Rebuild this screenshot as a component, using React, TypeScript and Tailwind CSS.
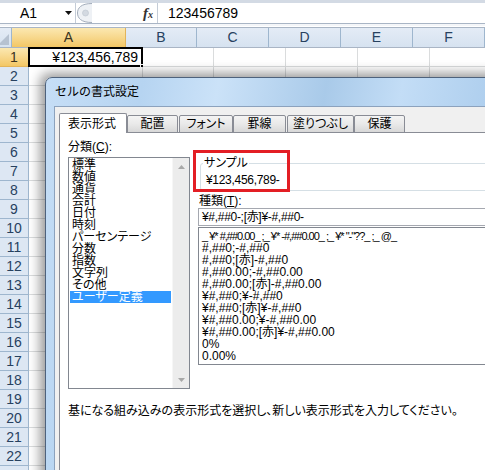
import React from "react";

const cols = [
  { label: "A", w: "w-[114px]" },
  { label: "B", w: "w-[71px]" },
  { label: "C", w: "w-[72px]" },
  { label: "D", w: "w-[72px]" },
  { label: "E", w: "w-[72px]" },
  { label: "F", w: "w-[72px]" },
];

const categories = [
  "標準",
  "数値",
  "通貨",
  "会計",
  "日付",
  "時刻",
  "パーセンテージ",
  "分数",
  "指数",
  "文字列",
  "その他",
  "ユーザー定義",
];

const formats = [
  '_ ¥* #,##0.00_ ;_ ¥* -#,##0.00_ ;_ ¥* "-"??_ ;_ @_',
  "#,##0;-#,##0",
  "#,##0;[赤]-#,##0",
  "#,##0.00;-#,##0.00",
  "#,##0.00;[赤]-#,##0.00",
  "¥#,##0;¥-#,##0",
  "¥#,##0;[赤]¥-#,##0",
  "¥#,##0.00;¥-#,##0.00",
  "¥#,##0.00;[赤]¥-#,##0.00",
  "0%",
  "0.00%",
];

const tabs = [
  { label: "表示形式", cls: "w-[68px]", active: true },
  { label: "配置", cls: "w-[51px]" },
  { label: "フォント", cls: "ml-[1px] w-[54px]" },
  { label: "罫線", cls: "w-[53px]" },
  { label: "塗りつぶし", cls: "ml-[1px] w-[67px]" },
  { label: "保護", cls: "w-[51px]" },
];

function FormulaBar() {
  return (
    <div className="h-[27px] flex flex-col">
      <div className="h-[3px] bg-[#d3dae4]" />
      <div className="h-[21px] flex bg-white border-b border-[#a9b5c5]">
        <div className="w-[76px] relative flex items-center pl-[20px] text-[14px] text-black border-r border-[#c4ccd7]">
          A1
          <svg className="absolute left-[65px] top-[8px]" width="7" height="4" viewBox="0 0 7 4">
            <path d="M0 0 L7 0 L3.5 4 Z" fill="#111" />
          </svg>
        </div>
        <div className="w-[17px] flex items-center">
          <svg width="17" height="20" viewBox="0 0 17 20">
            <path d="M16 0.5 C5 0.5 1.5 5 1.5 10 C1.5 15 5 19.5 16 19.5" fill="#eef1f5" stroke="#a3adbb" />
            <circle cx="9.5" cy="10" r="3" fill="#d3d9e1" stroke="#bcc4cf" strokeWidth="0.6" />
          </svg>
        </div>
        <div className="w-[50px]" />
        <div className="w-[14px] flex items-center font-['Liberation_Serif',serif] italic font-bold text-[15px] text-[#333] leading-none">
          f<span className="text-[10px] mt-[3px]">x</span>
        </div>
        <div className="flex-1 flex items-center pl-[10px] border-l border-[#c4ccd7] text-[14px] text-black">
          123456789
        </div>
      </div>
      <div className="h-[2px] bg-[#f4f6f9]" />
    </div>
  );
}

function Sheet() {
  const rows = Array.from({ length: 23 }, (_, i) => i + 1);
  return (
    <div className="flex flex-col">
      <div className="h-[21px] flex border-t border-b border-[#a9b5c5] bg-linear-to-b from-[#e4ecf6] to-[#d6e2f0]">
        <div className="w-[29px] h-full border-r border-[#9eb6ce] relative">
          <svg className="absolute right-[2px] bottom-[2px]" width="11" height="11" viewBox="0 0 11 11">
            <path d="M11 0 L11 11 L0 11 Z" fill="#b6c2d1" />
          </svg>
        </div>
        {cols.map((c, i) => (
          <div
            key={c.label}
            className={`${c.w} shrink-0 h-full flex items-center justify-center text-[14px] border-r ${
              i === 0
                ? "bg-linear-to-b from-[#fbe8b1] to-[#f3c764] border-[#e2b45a] text-[#3a3320]"
                : "border-[#9eb6ce] text-[#27415f]"
            }`}
          >
            {c.label}
          </div>
        ))}
      </div>
      {rows.map((r) => (
        <div key={r} className="h-[19px] flex">
          <div
            className={`w-[29px] shrink-0 h-full flex items-center justify-center text-[14px] border-r border-b ${
              r === 1
                ? "bg-linear-to-b from-[#fbe8b1] to-[#f3c764] border-[#e2b45a] text-[#3a3320]"
                : "bg-[#dde7f3] border-[#9eb6ce] text-[#27415f]"
            }`}
          >
            {r < 23 ? r : ""}
          </div>
          {cols.map((c, i) => (
            <div
              key={c.label}
              className={`${c.w} shrink-0 h-full border-r border-b border-[#dadcdd] bg-white relative`}
            >
              {r === 1 && i === 0 && (
                <>
                  <div className="h-full flex items-center justify-end pr-[4px] text-[14px] text-black">¥123,456,789</div>
                  <div className="absolute -left-px -top-px -right-px -bottom-px border-2 border-black" />
                  <div className="absolute -right-[4px] -bottom-[4px] w-[6px] h-[6px] bg-black border border-white" />
                </>
              )}
            </div>
          ))}
        </div>
      ))}
    </div>
  );
}

function ArrowUp() {
  return (
    <svg width="7" height="4" viewBox="0 0 7 4">
      <path d="M0 4 L3.5 0 L7 4 Z" fill="#a8a8a8" />
    </svg>
  );
}

function ArrowDown() {
  return (
    <svg width="7" height="4" viewBox="0 0 7 4">
      <path d="M0 0 L7 0 L3.5 4 Z" fill="#a8a8a8" />
    </svg>
  );
}

function Dialog() {
  return (
    <div className="absolute left-[45px] top-[77px] w-[470px] h-[420px] rounded-tl-[7px] border border-[#4e627c] shadow-[-3px_-2px_12px_2px_rgba(0,0,0,0.4)] bg-[linear-gradient(100deg,#c6def6_0%,#b6d4f1_18%,#cbe2f8_32%,#a9cae9_52%,#c3ddf6_66%,#afcfee_82%,#c8e0f7_100%)] flex flex-col">
      <div className="h-[28px] pl-[9px] flex items-center text-[12px] text-black">セルの書式設定</div>
      <div className="flex-1 ml-[8px] border-l border-t border-[#8ca2bd] bg-[#f0f0f0] pt-[6px] pl-[4px] flex flex-col">
        <div className="h-[20px] flex items-end">
          {tabs.map((t) =>
            t.active ? (
              <div
                key={t.label}
                className={`${t.cls} h-[20px] relative z-10 bg-white border-t border-l border-r border-[#898c95] rounded-t-[2px] flex items-center justify-center pr-[2px] text-[12px] text-black`}
              >
                {t.label}
              </div>
            ) : (
              <div
                key={t.label}
                className={`${t.cls} h-[18px] bg-linear-to-b from-[#f4f4f4] via-[#e9e9e9] to-[#d8d8d8] border border-[#898c95] rounded-t-[2px] flex items-center justify-center text-[12px] text-black [font-feature-settings:'palt']`}
              >
                {t.label}
              </div>
            )
          )}
        </div>
        <div className="flex-1 -mt-px bg-white border-l border-t border-[#898c95] pt-[8px] pl-[8px] flex flex-col">
          <div className="flex">
            <div className="w-[122px] shrink-0 flex flex-col">
              <div className="h-[12px] leading-[12px] text-[12px] text-black">
                分類(<span className="underline">C</span>):
              </div>
              <div className="mt-[4px] h-[232px] border border-[#828790] flex">
                <div className="flex-1 p-[1px] flex flex-col [font-feature-settings:'palt']">
                  {categories.map((c) => (
                    <div
                      key={c}
                      className={`h-[12px] leading-[12px] text-[12px] pl-[2px] whitespace-nowrap ${
                        c === "ユーザー定義" ? "bg-[#3399ff] text-white" : "text-black"
                      }`}
                    >
                      {c}
                    </div>
                  ))}
                </div>
                <div className="w-[17px] bg-[#ececec] border-l border-[#f6f6f6] flex flex-col justify-between">
                  <div className="h-[17px] flex items-center justify-center">
                    <ArrowUp />
                  </div>
                  <div className="h-[17px] flex items-center justify-center">
                    <ArrowDown />
                  </div>
                </div>
              </div>
            </div>
            <div className="ml-[8px] w-[320px] shrink-0 flex flex-col">
              <div className="mt-[22px] ml-[2px] h-[28px] border border-[#d5dfe5] rounded-[3px] relative pl-[5px] pt-[10px]">
                <div className="absolute left-[2px] -top-[7px] bg-white px-[1px] h-[12px] leading-[12px] text-[12px] text-black [font-feature-settings:'palt']">
                  サンプル
                </div>
                <div className="h-[12px] leading-[12px] text-[12px] text-black tracking-[-0.3px]">¥123,456,789-</div>
                <div className="absolute -left-[8px] -top-[14px] w-[97px] h-[42px] border-[3px] border-[#e31e24]" />
              </div>
              <div className="mt-[4px] ml-[1px] h-[12px] leading-[12px] text-[12px] text-black">
                種類(<span className="underline">T</span>):
              </div>
              <div className="mt-[1px] h-[18px] border border-[#a5a8b0] pl-[3px] flex items-center text-[12px] text-black whitespace-nowrap tracking-[-0.3px]">
                ¥#,##0-;[赤]¥-#,##0-
              </div>
              <div className="mt-[1px] h-[138px] border border-[#828790] pt-[2px] pl-[3px] flex flex-col">
                {formats.map((f, i) => (
                  <div
                    key={f}
                    className={`h-[12px] leading-[12px] text-black whitespace-pre ${
                      i === 0 ? "text-[11px] tracking-[-1px]" : "text-[12px]"
                    }`}
                  >
                    {f}
                  </div>
                ))}
              </div>
            </div>
          </div>
          <div className="mt-[16px] h-[12px] leading-[12px] text-[12px] text-black whitespace-nowrap [font-feature-settings:'palt']">
            基になる組み込みの表示形式を選択し、新しい表示形式を入力してください。
          </div>
        </div>
      </div>
    </div>
  );
}

export default function App() {
  return (
    <div className="w-[485px] h-[470px] relative overflow-hidden bg-white font-['Liberation_Sans','Noto_Sans_CJK_JP',sans-serif]">
      <FormulaBar />
      <Sheet />
      <Dialog />
    </div>
  );
}
